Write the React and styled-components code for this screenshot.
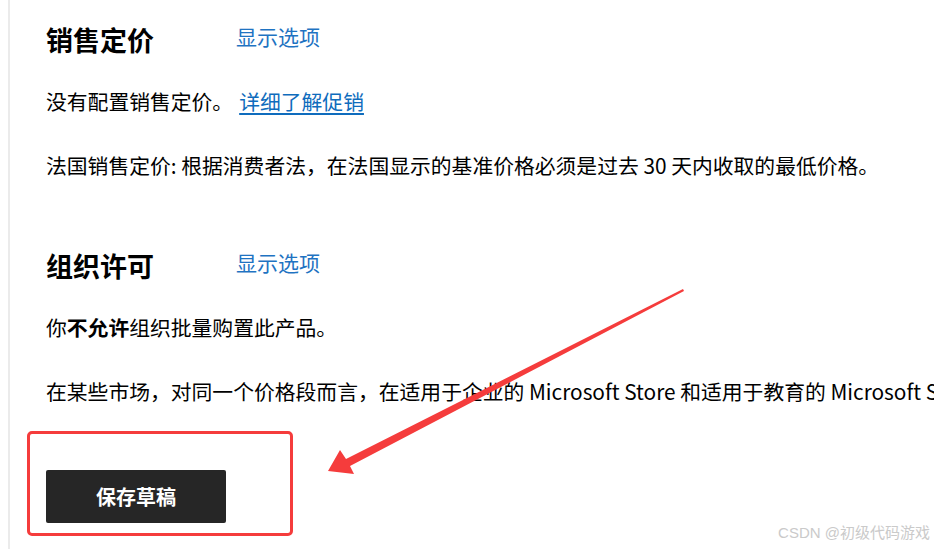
import React from "react";
import styled, { createGlobalStyle } from "styled-components";

const GlobalStyle = createGlobalStyle`
  html, body {
    margin: 0;
    padding: 0;
    background: #fff;
    overflow: hidden;
  }
  body {
    font-family: "Noto Sans CJK SC", "Open Sans", sans-serif;
    color: #000;
  }
`;

const Page = styled.div`
  position: relative;
  width: 934px;
  height: 549px;
  overflow: hidden;
  box-sizing: border-box;
  padding-left: 8px;
`;

const Content = styled.main`
  height: 100%;
  border-left: 2px solid #ebebeb;
  padding-left: 36px;
  padding-top: 20px;
  white-space: nowrap;
`;

const Section = styled.section`
  margin-top: ${(p) => p.$gap || 0}px;
`;

const HeaderRow = styled.div`
  display: grid;
  grid-template-columns: 190px auto;
  align-items: center;
  height: 40px;
`;

const Title = styled.h2`
  margin: 0;
  font-size: 27px;
  font-weight: 700;
  line-height: 40px;
`;

const Toggle = styled.button`
  justify-self: start;
  background: none;
  border: 0;
  padding: 0;
  font-family: inherit;
  font-size: 21px;
  color: #1f73c2;
  line-height: 30px;
  margin-top: -8px;
  cursor: pointer;
`;

const Text = styled.p`
  margin: ${(p) => p.$gap || 0}px 0 0;
  font-size: 20.8px;
  font-weight: 400;
  line-height: 30px;
`;

const LearnLink = styled.a`
  color: #0f6cbd;
  text-decoration: underline;
  text-decoration-thickness: 2px;
  text-underline-offset: 3px;
  margin-left: 6px;
`;

const Strong = styled.b`
  font-weight: 700;
`;

const Actions = styled.div`
  position: relative;
  margin-top: 64px;
`;

const SaveButton = styled.button`
  width: 180px;
  height: 53px;
  border: 0;
  border-radius: 2px;
  background: #262626;
  color: #fff;
  font-family: inherit;
  font-size: 20px;
  font-weight: 700;
  cursor: pointer;
`;

const Highlight = styled.div`
  position: absolute;
  left: -19px;
  top: -39px;
  width: 266px;
  height: 105px;
  box-sizing: border-box;
  border: 3px solid #f53c3c;
  border-radius: 5px;
  pointer-events: none;
`;

const Overlay = styled.svg`
  position: absolute;
  left: 0;
  top: 0;
  pointer-events: none;
`;

const Watermark = styled.span`
  position: absolute;
  right: 4px;
  bottom: 7px;
  font-family: "Liberation Sans", "Noto Sans CJK SC", sans-serif;
  font-size: 15px;
  color: #cacaca;
`;

export default function App() {
  return (
    <>
      <GlobalStyle />
      <Page>
        <Content>
          <Section>
            <HeaderRow>
              <Title>销售定价</Title>
              <Toggle>显示选项</Toggle>
            </HeaderRow>
            <Text $gap={26}>
              没有配置销售定价。<LearnLink href="#">详细了解促销</LearnLink>
            </Text>
            <Text $gap={34}>
              法国销售定价: 根据消费者法，在法国显示的基准价格必须是过去 30 天内收取的最低价格。
            </Text>
          </Section>

          <Section $gap={66}>
            <HeaderRow>
              <Title>组织许可</Title>
              <Toggle>显示选项</Toggle>
            </HeaderRow>
            <Text $gap={26}>
              你<Strong>不允许</Strong>组织批量购置此产品。
            </Text>
            <Text $gap={34}>
              在某些市场，对同一个价格段而言，在适用于企业的 Microsoft Store 和适用于教育的 Microsoft Store 中的价格可能不同。
            </Text>
          </Section>

          <Actions>
            <SaveButton>保存草稿</SaveButton>
            <Highlight />
          </Actions>
        </Content>

        <Overlay width="934" height="549" viewBox="0 0 934 549">
          <polygon
            points="683,289 684,291 350,466 354,474 328,471 340,450 346,459"
            fill="#f53c3c"
          />
        </Overlay>
        <Watermark>CSDN @初级代码游戏</Watermark>
      </Page>
    </>
  );
}
